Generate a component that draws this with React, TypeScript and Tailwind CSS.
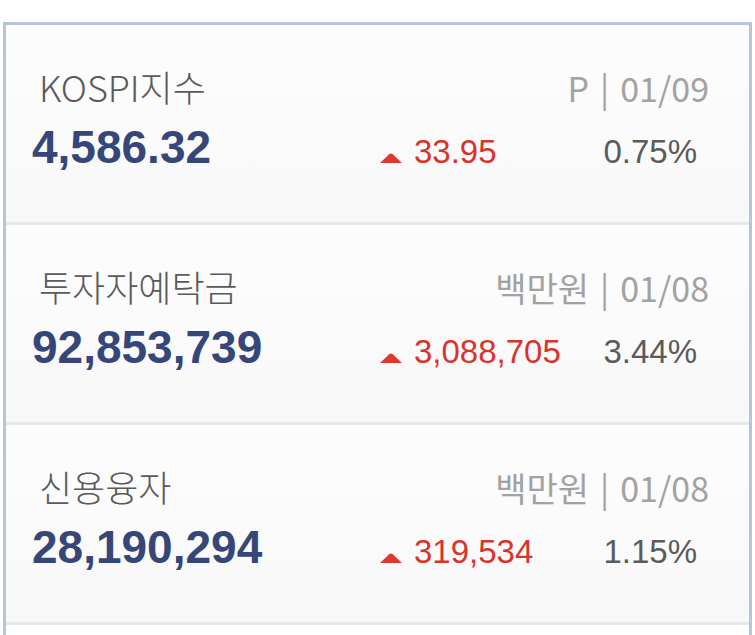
import { ReactNode } from 'react';

type Item = {
    title: string;
    meta: string;
    value: string;
    change: string;
    rate: string;
};

const items: Item[] = [
    { title: 'KOSPI지수', meta: 'P | 01/09', value: '4,586.32', change: '33.95', rate: '0.75%' },
    { title: '투자자예탁금', meta: '백만원 | 01/08', value: '92,853,739', change: '3,088,705', rate: '3.44%' },
    { title: '신용융자', meta: '백만원 | 01/08', value: '28,190,294', change: '319,534', rate: '1.15%' },
];

const krFont = "font-['Noto_Sans_CJK_KR','Noto_Sans',sans-serif]";
const numFont = "font-['Liberation_Sans',Arial,sans-serif]";

function UpArrow() {
    return (
        <svg width="22" height="10" viewBox="0 0 22 10" className="mr-[12px] shrink-0">
            <path d="M0 10 L9.2 1.2 Q11 -0.4 12.8 1.2 L22 10 Z" fill="#dd3a2f" />
        </svg>
    );
}

function Meta({ text }: { text: string }) {
    const [unit, date] = text.split(' | ');
    return (
        <span className="text-[34px] leading-[34px] text-[#a2a2a2]">
            {unit}
            <span className="mx-[11px]">|</span>
            {date}
        </span>
    );
}

function Row({ item, children }: { item: Item; children?: ReactNode }) {
    return (
        <div className="h-[200px] border-b-[3px] border-[#e6e7ea] bg-gradient-to-b from-[#fdfdfd] to-[#f8f8f9] pl-[26px] pr-[40px] pt-[44px]">
            <div className={`flex items-baseline justify-between ${krFont}`}>
                <span className="pl-[7px] text-[36px] font-light leading-[34px] text-[#5a5a5a]">{item.title}</span>
                <Meta text={item.meta} />
            </div>
            <div className={`mt-[19px] flex items-baseline ${numFont}`}>
                <span className="w-[348px] shrink-0 text-[46px] font-bold leading-[46px] text-[#374679]">
                    {item.value}
                </span>
                <span className="flex flex-1 items-baseline text-[33px] leading-[33px] text-[#d8342b]">
                    <UpArrow />
                    {item.change}
                </span>
                <span className="mr-[12px] text-[33px] leading-[33px] text-[#5b5b5b]">{item.rate}</span>
            </div>
            {children}
        </div>
    );
}

export default function App() {
    return (
        <div className="h-[635px] w-[755px] overflow-hidden bg-white px-[3px] pt-[22px]">
            <div className="h-full border-x-[3px] border-t-[3px] border-[#b7c4dc] bg-white">
                {items.map((item) => (
                    <Row key={item.title} item={item} />
                ))}
                <div className="h-[40px] bg-white" />
            </div>
        </div>
    );
}
